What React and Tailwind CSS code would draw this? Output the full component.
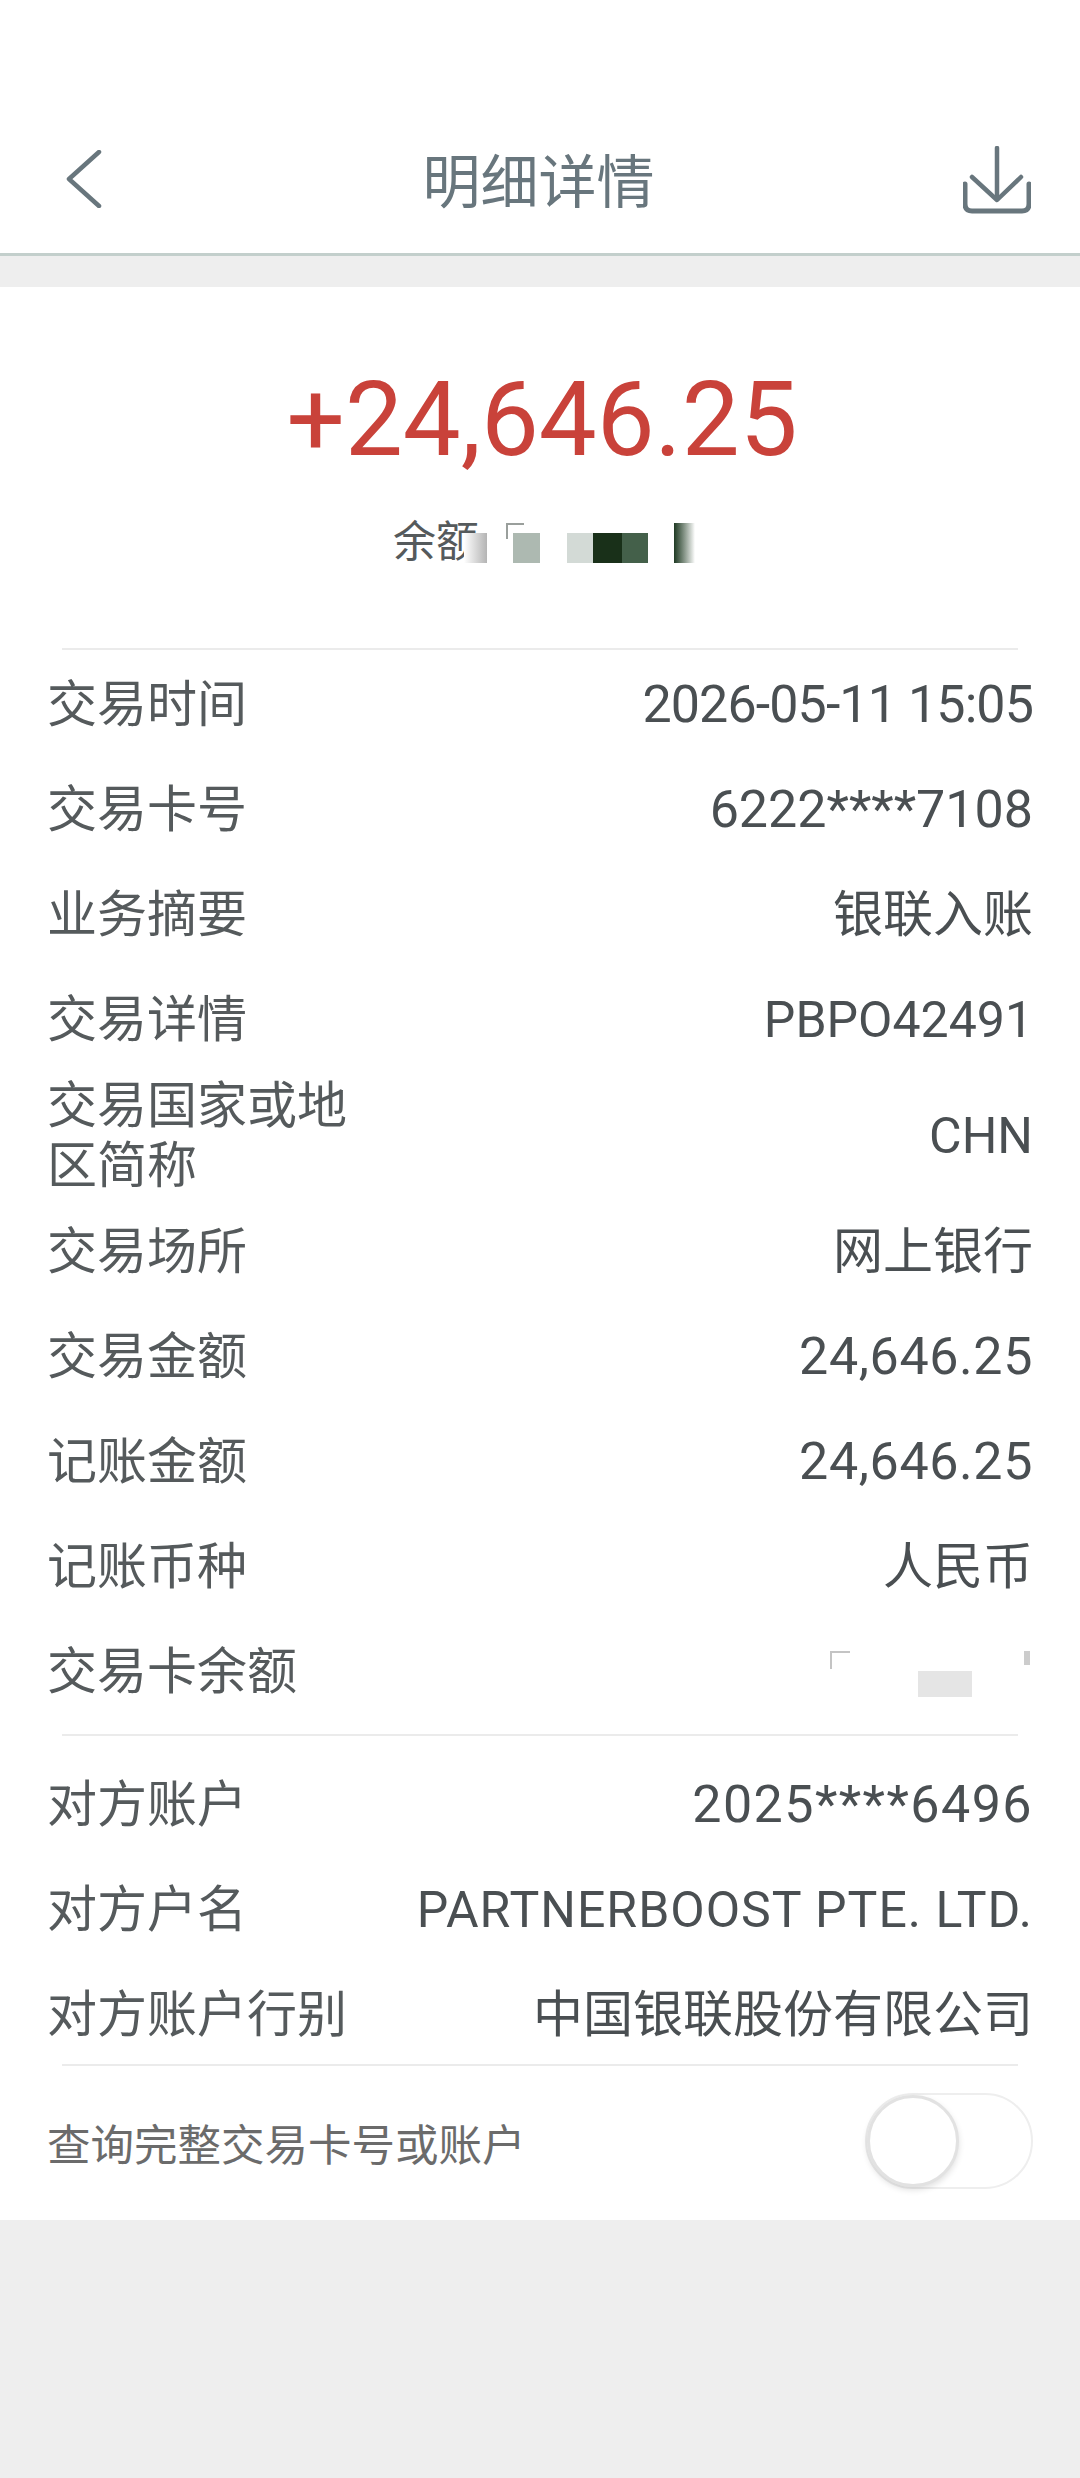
import React from 'react'

const Row = ({ label, children, tall }) => (
    <div className={`flex items-center justify-between px-[47px] ${tall ? 'h-[127px]' : 'h-[105px]'}`}>
        <div className="w-[310px] shrink-0 text-[50px] leading-[60px] text-[#555a5c]">{label}</div>
        <div className="text-[50px] leading-[60px] text-[#4a4f52] whitespace-nowrap">{children}</div>
    </div>
)

const Divider = () => <div className="mx-[62px] h-[2px] bg-[#ebebeb]" />

const BackIcon = () => (
    <svg width="36" height="58" viewBox="0 0 36 58" fill="none" stroke="#68767d" strokeWidth="4.5" strokeLinecap="round" strokeLinejoin="round">
        <path d="M33 2 L3 29 L33 56" />
    </svg>
)

const DownloadIcon = () => (
    <svg width="68" height="68" viewBox="0 0 68 68" fill="none" stroke="#68767d" strokeWidth="4.5" strokeLinecap="round" strokeLinejoin="round">
        <path d="M34 2 V52" />
        <path d="M9 31 L34 54 L58 31" />
        <path d="M2 38 V58 Q2 65 9 65 H59 Q66 65 66 58 V38" strokeWidth="5" />
    </svg>
)

const App = () => {
    return (
        <div className="w-[1080px] h-[2478px] bg-[#eeeeee] font-['Roboto','Noto_Sans_CJK_SC',sans-serif]">
            <div className="h-[256px] bg-white border-b-[3px] border-[#c3cfcc] flex items-end justify-between pl-[66px] pr-[49px] pb-[39px]">
                <div className="mb-[6px]"><BackIcon /></div>
                <div className="ml-[12px] -mb-[3px] text-[58px] leading-[68px] text-[#68767d]">明细详情</div>
                <DownloadIcon />
            </div>

            <div className="mt-[31px] h-[1933px] bg-white">
                <div className="flex h-[361px] flex-col items-center">
                    <div className="mt-[73px] ml-[4px] text-[103px] leading-[120px] text-[#c9423a]">+24,646.25</div>
                    <div className="relative mt-[32px] ml-[16px] flex h-[60px] w-[310px] items-center text-[43px] text-[#555a5c]">
                        <span>余额</span>
                        <span className="absolute left-[71px] top-[21px] h-[30px] w-[23px] bg-gradient-to-r from-[#ffffff] to-[#b4b4b4]" />
                        <span className="absolute left-[113px] top-[11px] h-[16px] w-[18px] border-l-[2px] border-t-[2px] border-[#9a9f9c]" />
                        <span className="absolute left-[120px] top-[21px] h-[30px] w-[27px] bg-[#adb9b1]" />
                        <span className="absolute left-[174px] top-[21px] h-[30px] w-[26px] bg-[#d3dad6]" />
                        <span className="absolute left-[200px] top-[21px] h-[30px] w-[29px] bg-[#193019]" />
                        <span className="absolute left-[229px] top-[21px] h-[30px] w-[26px] bg-[#44604a]" />
                        <span className="absolute left-[281px] top-[11px] h-[40px] w-[21px] bg-gradient-to-r from-[#1f3a24] to-[#ffffff]" />
                    </div>
                </div>

                <Divider />
                <div className="h-[2px]" />

                <Row label="交易时间"><span className="text-[52px] tracking-[-0.9px]">2026-05-11 15:05</span></Row>
                <Row label="交易卡号"><span className="text-[52px]">6222****7108</span></Row>
                <Row label="业务摘要">银联入账</Row>
                <Row label="交易详情">PBPO42491</Row>
                <Row label="交易国家或地区简称" tall>CHN</Row>
                <Row label="交易场所">网上银行</Row>
                <Row label="交易金额"><span className="text-[52px] tracking-[0.6px]">24,646.25</span></Row>
                <Row label="记账金额"><span className="text-[52px] tracking-[0.6px]">24,646.25</span></Row>
                <Row label="记账币种">人民币</Row>
                <Row label="交易卡余额">
                    <div className="relative h-[60px] w-[203px]">
                        <span className="absolute left-0 top-[9px] h-[18px] w-[20px] border-l-[2px] border-t-[2px] border-[#c4c4c4]" />
                        <span className="absolute left-[88px] top-[29px] h-[26px] w-[54px] bg-[#e5e5e5]" />
                        <span className="absolute right-[3px] top-[9px] h-[14px] w-[6px] bg-[#cccccc]" />
                    </div>
                </Row>

                <div className="mt-[10px]"><Divider /></div>
                <div className="h-[16px]" />

                <Row label="对方账户"><span className="text-[52px] tracking-[1.45px]">2025****6496</span></Row>
                <Row label="对方户名"><span className="tracking-[1px]">PARTNERBOOST PTE. LTD.</span></Row>
                <Row label="对方账户行别">中国银联股份有限公司</Row>

                <div className="-mt-[3px]"><Divider /></div>

                <div className="flex h-[150px] items-center justify-between px-[47px]">
                    <div className="pt-[12px] text-[43.5px] leading-[60px] text-[#6b6b6b]">查询完整交易卡号或账户</div>
                    <div className="flex h-[96px] w-[168px] items-center rounded-full border-[2px] border-[#eeeeee] bg-white">
                        <div className="h-[92px] w-[92px] rounded-full border-[3px] border-[#e2e2e2] bg-white shadow-[0_3px_6px_rgba(0,0,0,0.12)]" />
                    </div>
                </div>
            </div>
        </div>
    )
}

export default App
